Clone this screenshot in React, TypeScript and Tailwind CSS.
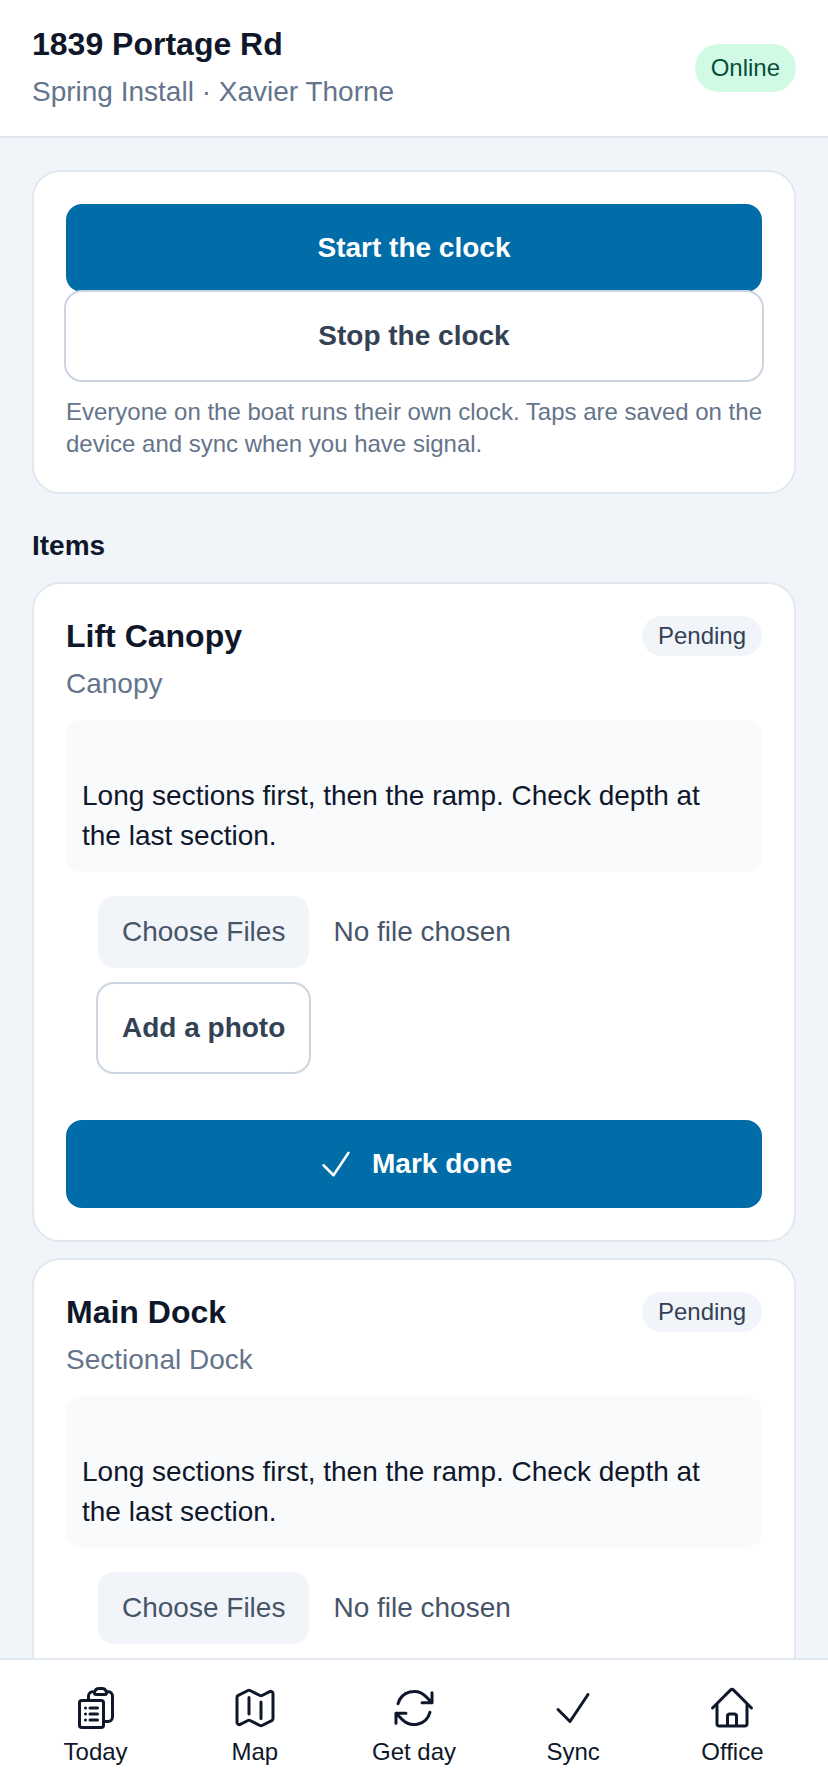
import type { ComponentType } from 'react';
import {
  HiOutlineArrowPath,
  HiOutlineCheck,
  HiOutlineClipboardDocumentList,
  HiOutlineHome,
  HiOutlineMap,
} from 'react-icons/hi2';

const items = [
  { name: 'Lift Canopy', kind: 'Canopy' },
  { name: 'Main Dock', kind: 'Sectional Dock' },
];

const tabs: { label: string; icon: ComponentType<{ size?: number }> }[] = [
  { label: 'Today', icon: HiOutlineClipboardDocumentList },
  { label: 'Map', icon: HiOutlineMap },
  { label: 'Get day', icon: HiOutlineArrowPath },
  { label: 'Sync', icon: HiOutlineCheck },
  { label: 'Office', icon: HiOutlineHome },
];

function ItemCard({ name, kind }: { name: string; kind: string }) {
  return (
    <section className="rounded-[28px] border-2 border-[#e2e8f0] bg-white p-8">
      <div className="flex items-start justify-between">
        <h3 className="text-[32px] leading-10 font-bold text-[#0f172a]">{name}</h3>
        <span className="rounded-full bg-[#f1f5f9] px-4 py-1 text-2xl leading-8 text-[#334155]">Pending</span>
      </div>
      <p className="mt-2 text-[28px] leading-10 text-[#64748b]">{kind}</p>
      <p className="mt-4 rounded-2xl bg-[#f8fafc] p-4 text-[28px] leading-10 text-[#0f172a]">
        <br />
        Long sections first, then the ramp. Check depth at the last section.
      </p>
      <div className="mt-6 flex flex-col items-start gap-4 px-8">
        <input
          type="file"
          multiple
          aria-label="Photos"
          className="block w-full text-[28px] leading-8 text-[#475569] file:mr-6 file:rounded-2xl file:border-0 file:bg-[#f1f5f9] file:px-6 file:py-5 file:text-[28px] file:leading-8 file:text-[#475569]"
        />
        <button className="h-[88px] rounded-2xl bg-white px-6 text-[28px] leading-8 font-bold text-[#334155] ring-2 ring-[#cbd5e1]">
          Add a photo
        </button>
      </div>
      <button className="mt-12 flex h-[88px] w-full items-center justify-center gap-4 rounded-2xl bg-[#006da8] text-[28px] font-bold text-white">
        <HiOutlineCheck size={40} />
        Mark done
      </button>
    </section>
  );
}

export default function App() {
  return (
    <div className="flex h-[1792px] flex-col overflow-hidden bg-[#f1f5f9] font-['Liberation_Sans',sans-serif]">
      <header className="flex items-center justify-between border-b-2 border-[#e2e8f0] bg-white px-8 py-6">
        <div className="flex flex-col gap-2">
          <h1 className="text-[32px] leading-10 font-bold text-[#0f172a]">1839 Portage Rd</h1>
          <p className="text-[28px] leading-10 text-[#64748b]">Spring Install · Xavier Thorne</p>
        </div>
        <span className="rounded-full bg-[#d1fae5] px-4 py-2 text-2xl leading-8 text-[#064e3b]">Online</span>
      </header>

      <main className="flex min-h-0 flex-1 flex-col overflow-hidden p-8">
        <section className="shrink-0 rounded-[28px] border-2 border-[#e2e8f0] bg-white p-8">
          <button className="h-[88px] w-full rounded-2xl bg-[#006da8] text-[28px] font-bold text-white">
            Start the clock
          </button>
          <button className="h-[88px] w-full rounded-2xl bg-white text-[28px] font-bold text-[#334155] ring-2 ring-[#cbd5e1]">
            Stop the clock
          </button>
          <p className="mt-4 text-2xl leading-8 text-[#64748b]">
            Everyone on the boat runs their own clock. Taps are saved on the device and sync when you have signal.
          </p>
        </section>

        <h2 className="mt-8 shrink-0 text-[28px] leading-10 font-bold text-[#0f172a]">Items</h2>

        <div className="mt-4 flex shrink-0 flex-col gap-4">
          {items.map((item) => (
            <ItemCard key={item.name} name={item.name} kind={item.kind} />
          ))}
        </div>
      </main>

      <nav className="grid shrink-0 grid-cols-5 border-t-2 border-[#e2e8f0] bg-white px-4 py-6">
        {tabs.map(({ label, icon: Icon }) => (
          <button key={label} className="flex flex-col items-center gap-1 text-2xl leading-8 text-[#0f172a]">
            <Icon size={48} />
            {label}
          </button>
        ))}
      </nav>
    </div>
  );
}
